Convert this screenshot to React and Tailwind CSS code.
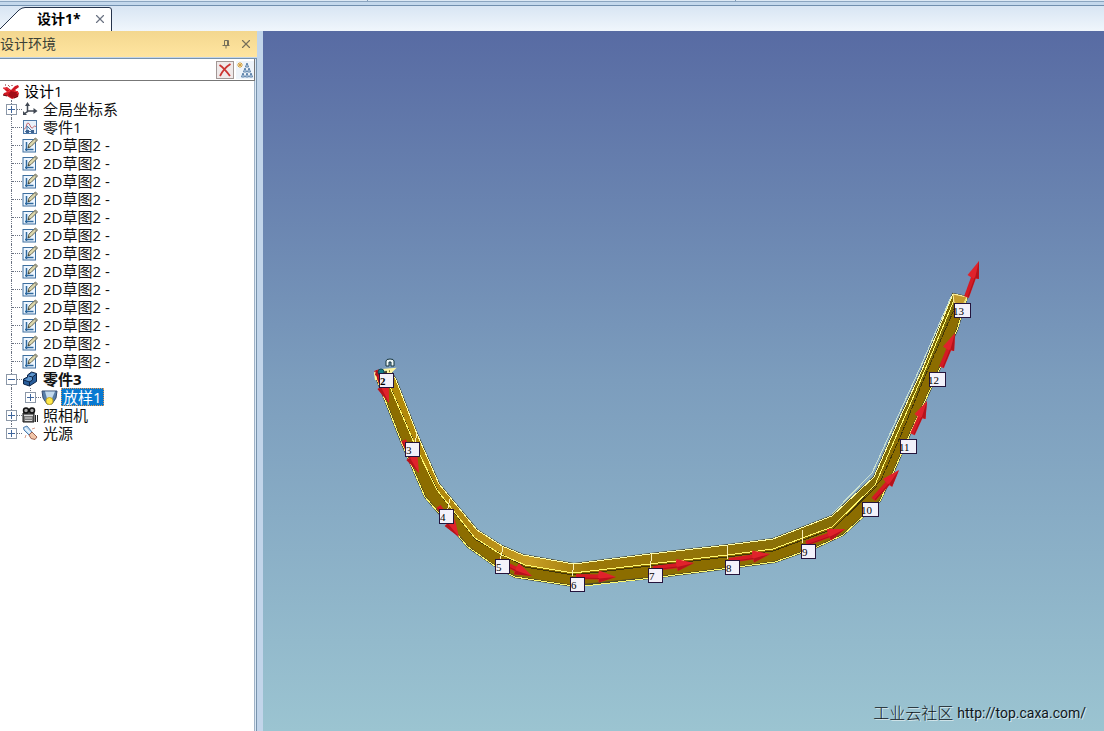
import React, { useState } from 'react';
import { X } from 'lucide-react';

const sketches = Array.from({ length: 13 }, (_, i) => ({ id: `sketch-${i}`, label: '2D草图2 -', icon: 'sketch' }));

const treeItems = [
  { id: 'axes', label: '全局坐标系', icon: 'axes', toggle: '+' },
  { id: 'part1', label: '零件1', icon: 'part' },
  ...sketches,
  { id: 'part3', label: '零件3', icon: 'block', toggle: '-', bold: true },
  { id: 'loft', label: '放样1', icon: 'loft', toggle: '+', child: true },
  { id: 'camera', label: '照相机', icon: 'camera', toggle: '+' },
  { id: 'light', label: '光源', icon: 'light', toggle: '+', last: true },
];

const stations = [
  { n: 2, x: 386, y: 380 },
  { n: 3, x: 412, y: 449 },
  { n: 4, x: 446, y: 516 },
  { n: 5, x: 502, y: 566 },
  { n: 6, x: 577, y: 584 },
  { n: 7, x: 655, y: 575 },
  { n: 8, x: 732, y: 567 },
  { n: 9, x: 808, y: 551 },
  { n: 10, x: 870, y: 509 },
  { n: 11, x: 908, y: 446 },
  { n: 12, x: 937, y: 379 },
  { n: 13, x: 962, y: 310 },
];

// tail x, tail y, tip x, tip y
const arrows = [
  [377, 370, 389, 403],
  [404, 440, 419, 473],
  [439, 506, 459, 537],
  [498, 560, 532, 576],
  [576, 576, 616, 577],
  [653, 568, 694, 563],
  [729, 560, 770, 554],
  [806, 543, 845, 529],
  [873, 499, 899, 470],
  [912, 434, 927, 401],
  [941, 367, 955, 333],
  [966, 297, 979, 261],
];

const Icon = ({ name }) => {
  switch (name) {
    case 'root':
      return (
        <svg viewBox="0 0 18 16" className="h-4 w-[18px] shrink-0" aria-hidden="true">
          <path d="M1 5l4-1 4 3 4-4 3-1 1 2-4 3 4 3-1 4-6 2-5-3-4-1 1-2 3-1z" fill="#d01722" />
          <path d="M9 8l3 1 4-1v4l-6 3-4-3z" fill="#a10c17" />
          <path d="M1 5l5 1 2 2-3 1M12 8l4 1-1 2" fill="none" stroke="#f0323b" />
          <path d="M3 2h2M6 2l2 2M10 2v2" stroke="#7a1118" strokeDasharray="1 1" />
          <path d="M1 12l4 1M12 15l4-2" stroke="#5d0c12" />
        </svg>
      );
    case 'axes':
      return (
        <svg viewBox="0 0 16 16" className="size-4 shrink-0" aria-hidden="true">
          <path d="M5.500 3v7.500l-3.500 2.500M5.500 10h8" fill="none" stroke="#414853" strokeWidth="1.500" />
          <path d="M3 5l2.500-4L8 5zM11.500 7l4 3-4 3zM1 10v4h4z" fill="#414853" />
        </svg>
      );
    case 'part':
      return (
        <svg viewBox="0 0 16 16" className="size-4 shrink-0" aria-hidden="true">
          <rect x="1.500" y="1.500" width="13" height="13" fill="#e8f0fa" stroke="#4f79a8" />
          <path d="M2 10c3 0 2-6 4-6s2 5 4 5 2-4 4-1" fill="none" stroke="#c4666b" />
          <path d="M5 12.500V7l5 5M3 12.500h9" fill="none" stroke="#4778aa" />
          <path d="M4 11h3v3H4zM9 11h3v3H9z" fill="#3d6390" />
        </svg>
      );
    case 'sketch':
      return (
        <svg viewBox="0 0 16 16" className="size-4 shrink-0" aria-hidden="true">
          <rect x="1" y="2.500" width="12.500" height="12.500" fill="#edf6ff" stroke="#3d6f9f" />
          <path d="M4.500 5v7.500h7M3 12.500h3M4.500 11v3" fill="none" stroke="#2e699e" strokeWidth="1.500" />
          <path d="M6 11l1-4 6.500-6L15.500 3 9 9.500z" fill="#ded9ad" stroke="#696956" />
          <path d="M6 11l.5-2 1.500 1.300z" fill="#3b3b31" />
          <path d="M12.500 2l2.300 2" stroke="#777" />
        </svg>
      );
    case 'block':
      return (
        <svg viewBox="0 0 16 16" className="size-4 shrink-0" aria-hidden="true">
          <path d="M1.500 8l4-2V4l4-3 5 1.500v8l-7 4.500-6-2z" fill="#285d9a" stroke="#0d2446" />
          <path d="M6 5l4-3 4 1-3.500 3v3L7 11 2 9l4-2z" fill="#5e96ce" />
          <path d="M7.500 10.500V15M10.500 6v3l-3 2-6-2M10.500 6l4-3M10.500 6l-4-1" fill="none" stroke="#0d2446" />
        </svg>
      );
    case 'loft':
      return (
        <svg viewBox="0 0 17 17" className="size-[17px] shrink-0" aria-hidden="true">
          <path d="M1 2h15l-1 7-4 6H6L2 9z" fill="#587da7" stroke="#344c70" />
          <path d="M4 2.500h10l-3 7H6z" fill="#c3daed" />
          <circle cx="8.500" cy="12" r="3.500" fill="#ffe94c" stroke="#c2a729" />
        </svg>
      );
    case 'camera':
      return (
        <svg viewBox="0 0 16 16" className="size-4 shrink-0" aria-hidden="true">
          <path d="M1 6h11v9H1z" fill="#777" stroke="#151515" />
          <circle cx="4" cy="3.500" r="2.500" fill="#aaa" stroke="#111" strokeWidth="1.500" />
          <circle cx="10" cy="3.500" r="2.500" fill="#aaa" stroke="#111" strokeWidth="1.500" />
          <path d="M2 8.500h9M3 11h7M3 13.500h7" stroke="#ddd" />
          <path d="M13.500 8v7M15.500 8v7" stroke="#222" />
        </svg>
      );
    default:
      return (
        <svg viewBox="0 0 16 16" className="size-4 shrink-0" aria-hidden="true">
          <path d="M1.500 2.500L5 1l5 6-3 3-5-5z" fill="#b9d9f4" stroke="#4e7bab" />
          <path d="M3 3l5 5" stroke="#eef8ff" strokeWidth="1.500" />
          <path d="M7 10l3-3 5 5-2 2.500-4-1z" fill="#f1c5a8" stroke="#9d6252" />
          <path d="M4 10l-1 3M10 4l3-1" stroke="#d8a08c" />
        </svg>
      );
  }
};

const Toggle = ({ sign, label }) => (
  <button
    type="button"
    aria-label={label}
    className="relative z-10 flex size-[11px] shrink-0 items-center justify-center border border-[#8c98a8] bg-white"
  >
    <svg viewBox="0 0 7 7" className="size-[7px]" aria-hidden="true">
      <path d={sign === '+' ? 'M0 3.5h7M3.5 0v7' : 'M0 3.5h7'} stroke="#3e659b" />
    </svg>
  </button>
);

const TreeRow = ({ item, selected, onSelect }) => (
  <li className="flex h-[18px] items-center">
    <span className="relative flex h-full w-[22px] shrink-0 items-center pl-[6px]">
      <span className={`absolute left-[11px] top-0 border-l border-dotted border-gray-500 ${item.last ? 'h-1/2' : 'h-full'}`} />
      {!item.child && <span className="absolute left-3 right-0 top-1/2 border-t border-dotted border-gray-500" />}
      {item.toggle && !item.child && <Toggle sign={item.toggle} label={item.label} />}
    </span>
    {item.child && (
      <span className="relative flex h-full w-[19px] shrink-0 items-center pl-[3px]">
        <span className="absolute left-2 top-0 h-1/2 border-l border-dotted border-gray-500" />
        <span className="absolute left-2 right-0 top-1/2 border-t border-dotted border-gray-500" />
        <Toggle sign={item.toggle} label={item.label} />
      </span>
    )}
    <Icon name={item.icon} />
    <button
      type="button"
      onClick={onSelect}
      className={`ml-[3px] h-[18px] whitespace-nowrap px-[2px] text-[15px] leading-[18px] ${item.bold ? 'font-bold' : ''} ${
        selected ? 'bg-[#0879d1] text-white outline-1 -outline-offset-1 outline-dotted outline-[#e39a54]' : 'text-[#111]'
      }`}
    >
      {item.label}
    </button>
  </li>
);

const Arrow = ({ points }) => {
  const [x1, y1, x2, y2] = points;
  const angle = (Math.atan2(y2 - y1, x2 - x1) * 180) / Math.PI;
  const length = Math.hypot(x2 - x1, y2 - y1);
  return (
    <g transform={`translate(${x1} ${y1}) rotate(${angle})`}>
      <path d={`M0 -2H${length - 16}V3H0z`} fill="#d51a24" />
      <path d={`M${length - 17} -6L${length} 0L${length - 17} 6Q${length - 19} 0 ${length - 17} -6z`} fill="#e0222b" />
      <path d={`M${length - 17} 2L${length} 0L${length - 17} 6z`} fill="#b5131b" />
      <path d={`M1 2H${length - 17}`} stroke="#ab131a" />
    </g>
  );
};

const LoftModel = () => (
  <svg viewBox="263 31 841 700" className="block size-full" role="img" aria-label="放样1">
    <defs>
      <linearGradient id="topFace" x1="380" x2="960" y1="0" y2="0" gradientUnits="userSpaceOnUse">
        <stop offset="0" stopColor="#b28a08" />
        <stop offset="0.15" stopColor="#b08710" />
        <stop offset="0.26" stopColor="#c79d24" />
        <stop offset="0.36" stopColor="#9c7908" />
        <stop offset="1" stopColor="#796705" />
      </linearGradient>
    </defs>
    {/* Body */}
    <path
      d="M376 377L390 370L396 380L417 434L439 484L477 530L502 546L523 555L574 564L650 554L728 545L773 539L832 516L874 477L898 422L922 370L953 294L967 297L957 330L930 390L913 427L893 473L880 501L843 535L817 547L775 562L730 568L660 577L573 586L515 577L495 566L468 547L425 497L403 446z"
      fill="#8c6d00"
      stroke="#4a4a2a"
      strokeWidth="2"
    />
    <path
      d="M390 370L396 380L417 434L439 484L477 530L502 546L523 555L574 564L650 554L728 545L773 539L832 516L874 477L922 370L953 294L957 302L930 365L875 485L832 527L773 549L727 555L650 564L573 573L525 565L502 555L475 538L437 490L415 445L387 380z"
      fill="url(#topFace)"
    />
    {/* Edges */}
    <g fill="none" stroke="#3f350a" shapeRendering="crispEdges">
      <path d="M389 384L417 449L439 493L476 540L525 567L573 575L650 566L727 557L773 551L833 529L877 486" />
      <path d="M846 514L881 480L901 435L925 376L956 305" strokeDasharray="5 1" />
    </g>
    <g fill="none" stroke="#fff96e" shapeRendering="crispEdges">
      <path d="M376 377L403 446L425 497L468 547L495 566L515 577L573 586L593 585L660 577L730 568L775 562L817 547L843 535L880 501L893 473L913 427L930 390L957 330L967 298" />
      <path d="M387 380L415 445L437 490L475 538L502 555L525 565L573 573L650 564L727 555L773 549L832 527L875 485L898 432L925 370L954 300" />
      <path d="M390 370L396 380L417 434L439 484L477 530L502 546L523 555L574 564L650 554L728 545L773 539L832 516L874 477L898 422L922 370L953 294L967 297" stroke="#fffda8" />
      <path d="M417 434l-3 12M450 499l-3 13M503 547l-3 14M574 564l-2 12M652 554l-2 14M728 545l-1 14M802 530l1 13" stroke="#f9f0b4" />
      <path d="M832 514L872 473L920 368L951 297" stroke="#c9e0cf" />
    </g>
    <path d="M953 294l14 3-4 8-9-2z" fill="#c39b2d" stroke="#fff1a0" />
    {arrows.map((points) => (
      <Arrow key={points.join('-')} points={points} />
    ))}
    {/* Start handle */}
    <path d="M376 380l-1-7 7-3 12-1-4 4 4 5M388 370v6" fill="none" stroke="#fff6a0" strokeWidth="2" />
    <path d="M376 370l4 1-2 6-3-2z" fill="#b51219" />
    <path d="M386 366v-5q0-2 4-2t4 2v5h-3v-4h-2v4z" fill="#eef7f7" stroke="#15343d" />
    <circle cx="381" cy="372" r="3" fill="#147d87" stroke="#0b4650" />
    {stations.map(({ n, x, y }) => (
      <g key={n}>
        <rect
          x={n > 9 ? x - 8 : x - 7}
          y={y - 7}
          width={n > 9 ? 16 : 14}
          height="14"
          fill="#f3f1fa"
          stroke="#24143c"
          shapeRendering="crispEdges"
        />
        <text x={n > 9 ? x - 9 : x - 6} y={y + 5} fontSize="11" fontWeight={n === 2 ? 700 : 400} fill="#000" className="font-['Liberation_Serif',serif]">
          {n}
        </text>
      </g>
    ))}
  </svg>
);

const App = () => {
  const [query, setQuery] = useState('');
  const [selectedId, setSelectedId] = useState('loft');

  return (
    <div className="flex h-screen flex-col overflow-hidden bg-[#c2d5ea] font-['Open_Sans','Noto_Sans_CJK_SC',sans-serif]">
      {/* Document tabs */}
      <header className="shrink-0">
        <div className="flex h-[5px] flex-col bg-[#c4d8ec]">
          <div className="grid h-px grid-cols-3 divide-x divide-[#7f9ab6] bg-[#dce8f4]">
            <span />
            <span />
            <span />
          </div>
          <div className="h-px bg-[#8ba5c0]" />
        </div>
        <div className="flex h-[26px] items-end border-t border-[#718fae] bg-linear-to-b from-[#d8e5f3] to-[#f0f6fc]">
          <div className="relative flex h-6 w-28 items-center">
            <svg viewBox="0 0 112 24" className="absolute inset-0 size-full" aria-hidden="true">
              <path d="M0 22L19 3Q22 .5 25 .5H109Q111.500 .5 111.500 3V24H0z" fill="#fff" />
              <path d="M0 22L19 3Q22 .5 25 .5H109Q111.500 .5 111.500 3V24" fill="none" stroke="#26344c" />
            </svg>
            <button type="button" className="relative ml-[37px] text-sm leading-5 font-bold">设计1*</button>
            <button type="button" aria-label="关闭" className="relative ml-3 text-gray-500">
              <X className="size-[14px]" />
            </button>
          </div>
        </div>
      </header>

      <div className="flex min-h-0 flex-1">
        {/* Design tree */}
        <aside className="flex w-[257px] shrink-0 flex-col">
          <div className="flex h-[26px] shrink-0 items-center bg-linear-to-b from-[#f3d78f] to-[#ffe5a0] pr-1 text-[#3c4136]">
            <h2 className="flex-1 text-sm leading-5">设计环境</h2>
            <button type="button" aria-label="固定" className="mr-2 text-[#77705a]">
              <svg viewBox="0 0 10 10" className="size-[10px]" fill="none" stroke="currentColor" aria-hidden="true">
                <path d="M3.500 6V1.500h4V6M6.500 1.500V6M1.500 6.500h7M5 6v3.500" />
              </svg>
            </button>
            <button type="button" aria-label="关闭" className="text-[#77705a]">
              <X className="size-[14px]" />
            </button>
          </div>
          <div className="mt-px flex min-h-0 flex-1 flex-col border-t border-r border-[#7893ad] bg-[#dbe8f5] pr-px">
            <div className="flex h-[22px] shrink-0 items-center border-r border-b border-[#777] bg-white">
              <input
                aria-label="搜索"
                value={query}
                onChange={(e) => setQuery(e.target.value)}
                className="h-full min-w-0 flex-1 bg-white px-1 text-sm outline-none"
              />
              <button
                type="button"
                aria-label="清除"
                onClick={() => setQuery('')}
                className="flex size-[18px] items-center justify-center border border-[#a29795] bg-[#efe9e9]"
              >
                <svg viewBox="0 0 14 14" className="size-[14px]" aria-hidden="true">
                  <path d="M1.500 2Q6 5 12 13M12.500 1Q6 5 2 13" fill="none" stroke="#cc3431" strokeWidth="1.800" />
                </svg>
              </button>
              <button type="button" aria-label="查找" className="ml-[2px] flex size-[18px] items-center bg-[#eef4fa]">
                <svg viewBox="0 0 18 18" className="size-[18px]" fill="none" aria-hidden="true">
                  <path d="M4 1v6M1 4h6M2 2l4 4M6 2L2 6" stroke="#d9a33c" />
                  <path
                    d="M11 2l-1.500 4h3zM9 7l-1.500 4h3zM13 7l-1.500 4h3zM7 12l-1.500 4h3zM11 12l-1.500 4h3zM15 12l-1.500 4h3z"
                    fill="#dce9f4"
                    stroke="#587fa8"
                  />
                </svg>
              </button>
            </div>
            <div className="min-h-0 flex-1 overflow-hidden border-r border-[#9fb2c6] bg-white pt-px">
              <div className="flex h-[18px] items-center pl-[2px]">
                <Icon name="root" />
                <span className="ml-1 text-[15px] leading-[18px]">设计1</span>
              </div>
              <ul>
                {treeItems.map((item) => (
                  <TreeRow
                    key={item.id}
                    item={item}
                    selected={selectedId === item.id}
                    onSelect={() => setSelectedId(item.id)}
                  />
                ))}
              </ul>
            </div>
          </div>
        </aside>

        {/* Viewport */}
        <main className="relative ml-[6px] min-w-0 flex-1 bg-linear-to-b from-[#586ba3] via-[#7c9dbd] to-[#9bc4d1]">
          <LoftModel />
          <a
            href="http://top.caxa.com/"
            className="absolute right-[18px] bottom-2 flex items-center gap-1 text-[#10151a] [text-shadow:1px_1px_0_#d7e8ed]"
          >
            <span className="text-base leading-5 font-light">工业云社区</span>
            <span className="font-['Roboto',sans-serif] text-sm leading-5">http://top.caxa.com/</span>
          </a>
        </main>
      </div>
    </div>
  );
};

export default App;
